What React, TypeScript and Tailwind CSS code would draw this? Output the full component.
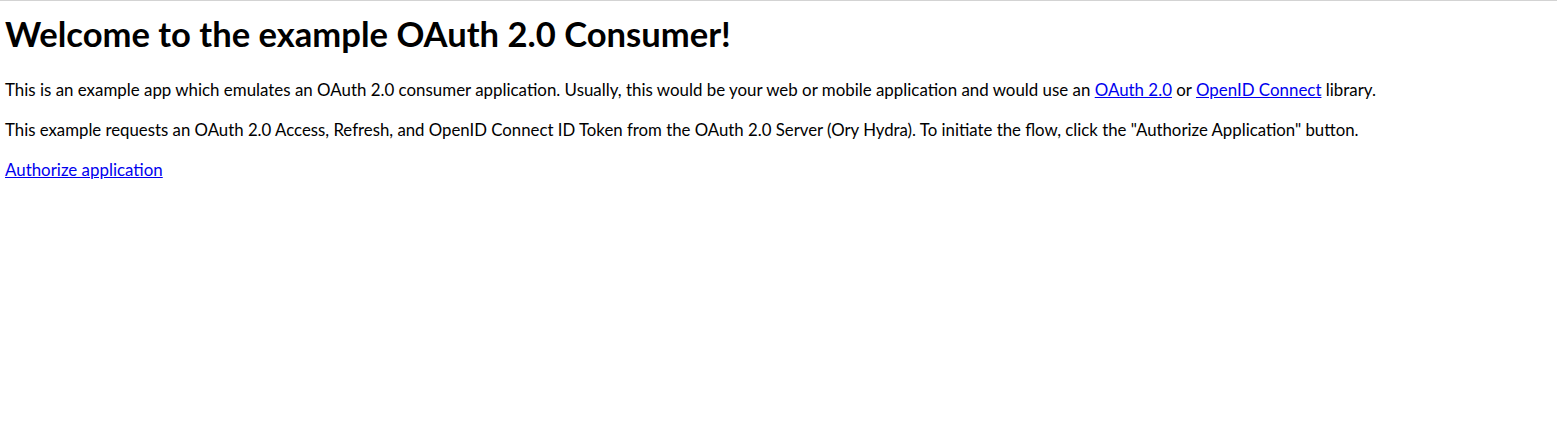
export default function App() {
  return (
    <div
      className="min-h-screen border-t border-[#d3d3d3] bg-white px-[5px] text-black"
      style={{ fontFamily: "Lato, sans-serif" }}
    >
      <h1 className="mt-[13px] text-[34.6px] font-bold leading-[40px]">
        Welcome to the example OAuth 2.0 Consumer!
      </h1>
      <p className="mt-[24px] text-[16.9px] leading-[24px]">
        This is an example app which emulates an OAuth 2.0 consumer application. Usually, this
        would be your web or mobile application and would use an{" "}
        <a href="#" className="text-[#0000ee] underline">
          OAuth 2.0
        </a>{" "}
        or{" "}
        <a href="#" className="text-[#0000ee] underline">
          OpenID Connect
        </a>{" "}
        library.
      </p>
      <p className="mt-4 text-[16.8px] leading-[24px]">
        This example requests an OAuth 2.0 Access, Refresh, and OpenID Connect ID Token from the
        OAuth 2.0 Server (Ory Hydra). To initiate the flow, click the "Authorize Application"
        button.
      </p>
      <p className="mt-4 text-[16.9px] leading-[24px]">
        <a href="#" className="text-[#0000ee] underline">
          Authorize application
        </a>
      </p>
    </div>
  );
}
